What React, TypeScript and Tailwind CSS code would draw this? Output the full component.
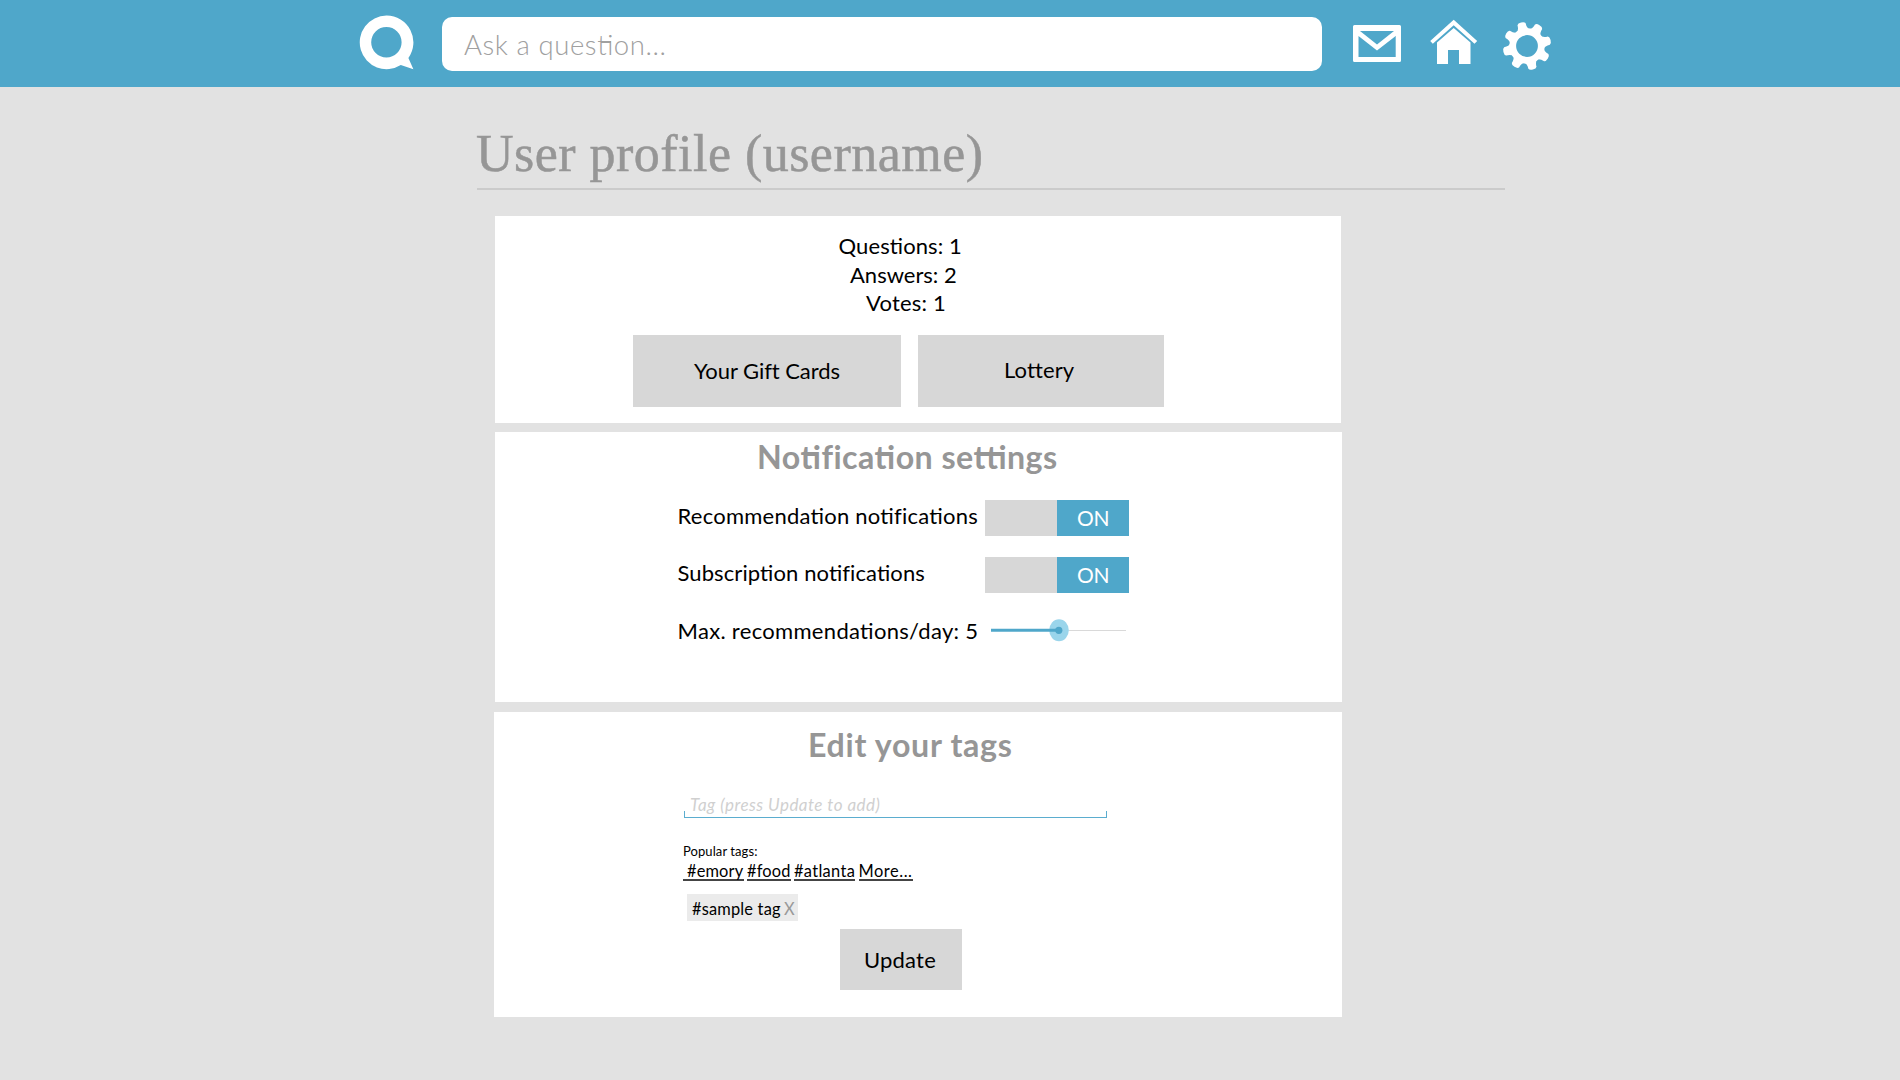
import React from "react";

/* Letter group joined by a crossbar at x-height, as in the "ti" and "tt" ligatures. */
function Lig({ children, bold = false, light = false }: { children: string; bold?: boolean; light?: boolean }) {
  const weight = bold
    ? "after:top-[0.465em] after:h-[0.11em]"
    : light
      ? "after:top-[0.485em] after:h-[0.05em]"
      : "after:top-[0.485em] after:h-[0.075em]";
  return (
    <span
      className={`relative after:absolute after:left-[0.15em] after:right-[0.12em] after:bg-current after:content-[''] ${weight}`}
    >
      {children}
    </span>
  );
}

function Logo() {
  return (
    <svg className="h-[58px] w-[56px]" viewBox="358 14 56 58" fill="#fff">
      <path
        fillRule="evenodd"
        d="M386.6 15.6a26.8 26.8 0 0 1 21.8 42.4l5 11.2-12.6-4.1A26.8 26.8 0 1 1 386.6 15.6ZM386.4 27a15.2 15.2 0 1 0 0 30.4 15.2 15.2 0 0 0 0-30.4Z"
      />
    </svg>
  );
}

function MailIcon() {
  return (
    <svg className="h-[37px] w-[48px]" viewBox="0 0 48 37" fill="#fff">
      <path
        fillRule="evenodd"
        d="M1.5 0h45A1.5 1.5 0 0 1 48 1.5v34a1.5 1.5 0 0 1-1.5 1.5h-45A1.5 1.5 0 0 1 0 35.5v-34A1.5 1.5 0 0 1 1.5 0ZM7 6l17 13.5L41 6ZM5.5 11v21h37.2V11L24 25.5Z"
      />
    </svg>
  );
}

function HomeIcon() {
  return (
    <svg className="h-[46px] w-[48px]" viewBox="1430 19 48 46" fill="#fff">
      <path d="M1453.7 19.8 1477.2 41l-2.7 2.7-20.8-18.4-20.9 18.4-2.6-2.7Z" />
      <path d="m1453.7 28 16.8 14.6V64H1459V50h-11v14h-11V42.6Z" />
    </svg>
  );
}

function GearIcon() {
  const teeth = [-14, 31, 76, 121, 166, 211, 256, 301];
  return (
    <svg className="h-[50px] w-[50px]" viewBox="-25 -25 50 50">
      <circle r="14.3" fill="none" stroke="#fff" strokeWidth="6.8" />
      {teeth.map((a) => (
        <path
          key={a}
          transform={`rotate(${a})`}
          d="M15-7Q17.5-4 22.5-4.2 24.3-3.5 24.3 0T22.5 4.2Q17.5 4 15 7Z"
          fill="#fff"
        />
      ))}
    </svg>
  );
}

function Toggle() {
  return (
    <div className="flex h-9 w-36 bg-[#d7d7d7]">
      <div className="ml-auto h-9 w-[72px] bg-[#4fa7ca] text-center text-[21px] leading-[36px] tracking-[-0.3px] text-white">
        ON
      </div>
    </div>
  );
}

export default function App() {
  return (
    <div className="h-[1080px] w-[1900px] overflow-hidden bg-[#e2e2e2] font-['Lato','Liberation_Sans',sans-serif] text-[22px] text-black">
      <header className="flex h-[87px] items-start bg-[#4fa7ca]">
        <div className="ml-[358px] mt-[14px]">
          <Logo />
        </div>
        <div className="ml-[28px] mt-[17px] h-[54px] w-[880px] rounded-[10px] bg-white pl-[22px] text-[27.5px] font-light leading-[56px] tracking-[0.58px] text-[#a0a0a0]">
          Ask a ques<Lig light>ti</Lig>on...
        </div>
        <div className="ml-[31px] mt-[25px]">
          <MailIcon />
        </div>
        <div className="ml-[29px] mt-[19px]">
          <HomeIcon />
        </div>
        <div className="ml-[24px] mt-[21px]">
          <GearIcon />
        </div>
      </header>

      <main>
        <h1 className="ml-[477px] h-[103px] w-[1028px] border-b-2 border-[#cbcbcb] pt-[37px] font-['Liberation_Serif',serif] text-[52px] leading-[60px] tracking-[0.47px] text-[#969696] [-webkit-text-stroke:0.5px_#969696]">
          <span className="-ml-px">User profile (username)</span>
        </h1>

        <section className="ml-[495px] mt-[26px] h-[207px] w-[846px] bg-white pt-[16px] leading-[28.5px]">
          <p className="ml-[343.5px] tracking-[0.1px]">
            Ques<Lig>ti</Lig>ons: 1
          </p>
          <p className="ml-[355px]">Answers: 2</p>
          <p className="ml-[371px] tracking-[0.2px]">Votes: 1</p>
          <div className="ml-[138px] mt-[17.5px] flex gap-[17px] leading-[28px]">
            <button className="h-[72px] w-[268px] bg-[#d7d7d7] pb-[22px] pl-[61px] pt-[22px] text-left tracking-[-0.05px]">
              Your Gift Cards
            </button>
            <button className="h-[72px] w-[246px] bg-[#d7d7d7] pb-[23px] pl-[86px] pt-[21px] text-left tracking-[0.1px]">
              Lo<Lig>tt</Lig>ery
            </button>
          </div>
        </section>

        <section className="ml-[495px] mt-[9px] h-[270px] w-[847px] bg-white pt-[5px]">
          <h2 className="ml-[262px] text-[32.2px] font-bold leading-[40px] tracking-[0.45px] text-[#969696]">
            No<Lig bold>ti</Lig>fica<Lig bold>ti</Lig>on se<Lig bold>tti</Lig>ngs
          </h2>
          <div className="ml-[182.5px] mt-[23px] flex leading-[32px]">
            <span className="w-[307.5px] tracking-[0.24px]">
              Recommenda<Lig>ti</Lig>on no<Lig>ti</Lig>fica<Lig>ti</Lig>ons
            </span>
            <Toggle />
          </div>
          <div className="ml-[182.5px] mt-[21px] flex leading-[32px]">
            <span className="w-[307.5px] tracking-[0.1px]">
              Subscrip<Lig>ti</Lig>on no<Lig>ti</Lig>fica<Lig>ti</Lig>ons
            </span>
            <Toggle />
          </div>
          <div className="ml-[182.5px] mt-[22px] flex leading-[32px]">
            <span className="w-[313.5px] tracking-[0.31px]">
              Max. recommenda<Lig>ti</Lig>ons/day: 5
            </span>
            <svg className="mt-1 h-[23px] w-[136px]" viewBox="0 0 136 23">
              <path d="M78 11.5h57" stroke="#d9d9d9" />
              <ellipse cx="68" cy="11.3" rx="9.8" ry="11" fill="#9ad5eb" />
              <path d="M0 11.3h68" stroke="#4fa7ca" strokeWidth="3" />
              <circle cx="67.8" cy="11.3" r="3.6" fill="#4fa7ca" />
            </svg>
          </div>
        </section>

        <section className="ml-[494px] mt-[10px] h-[305px] w-[848px] bg-white pt-[13px]">
          <h2 className="ml-[314px] text-[32.2px] font-bold leading-[40px] tracking-[0.68px] text-[#969696]">
            Edit your tags
          </h2>
          <div className="ml-[190px] mt-[27px] flex h-[26px] w-[423px] flex-col justify-end">
            <div className="h-[19px] pl-[6px] text-[17px] italic leading-[25px] tracking-[0.48px] text-[#d0d0d0]">
              Tag (press Update to add)
            </div>
            <div className="h-[7px] w-full border border-t-0 border-[#5badcf]" />
          </div>
          <p className="ml-[189px] mt-[25px] text-[13px] leading-4 tracking-[0.08px]">Popular tags:</p>
          <div className="ml-[189px] flex gap-[3.5px] text-[16.4px] leading-[23px]">
            <a className="h-[22px] w-[60.5px] border-b-2 border-[#444] pl-1 tracking-[0.15px]">#emory</a>
            <a className="h-[22px] w-[43.5px] border-b-2 border-[#444] tracking-[0.15px]">#food</a>
            <a className="h-[22px] w-[61px] border-b-2 border-[#444] tracking-[0.33px]">#atlanta</a>
            <a className="h-[22px] w-[54px] border-b-2 border-[#444] tracking-[0.55px]">More...</a>
          </div>
          <div className="ml-[193px] mt-[13px] flex h-[27px] w-[111px] bg-[#ebebeb] pl-[5px] text-[16.4px] leading-[29px]">
            <span className="w-[92px] tracking-[0.18px]">#sample tag</span>
            <span className="text-[#999]">X</span>
          </div>
          <button className="ml-[346px] mt-2 block h-[61px] w-[122px] bg-[#d7d7d7] pb-px pr-0.5 text-center tracking-[0.2px]">
            Update
          </button>
        </section>
      </main>
    </div>
  );
}
